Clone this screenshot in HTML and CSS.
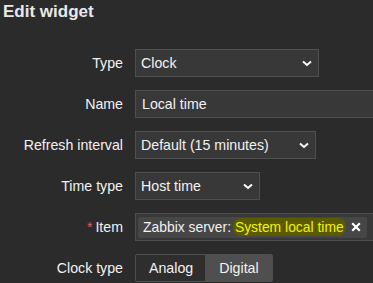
FILE: index.html
```html
<!DOCTYPE html>
<html lang="en">
<head>
    <meta charset="UTF-8">
    <meta name="viewport" content="width=device-width, initial-scale=1.0">
    <title>Edit widget</title>
    <link rel="stylesheet" href="styles.css">
</head>
<body>
    <div class="dialog">
        <h1 class="title">Edit widget</h1>
        <div class="form">
            <label class="label">Type</label>
            <div class="field">
                <div class="select select-type">
                    <span>Clock</span>
                    <svg class="chevron" width="10" height="7" viewBox="0 0 10 7"><polyline points="1,1.5 5,5 9,1.5" fill="none" stroke="#fff" stroke-width="2"/></svg>
                </div>
            </div>

            <label class="label">Name</label>
            <div class="field">
                <div class="input input-name">Local time</div>
            </div>

            <label class="label">Refresh interval</label>
            <div class="field">
                <div class="select select-refresh">
                    <span>Default (15 minutes)</span>
                    <svg class="chevron" width="10" height="7" viewBox="0 0 10 7"><polyline points="1,1.5 5,5 9,1.5" fill="none" stroke="#fff" stroke-width="2"/></svg>
                </div>
            </div>

            <label class="label">Time type</label>
            <div class="field">
                <div class="select select-time">
                    <span>Host time</span>
                    <svg class="chevron" width="10" height="7" viewBox="0 0 10 7"><polyline points="1,1.5 5,5 9,1.5" fill="none" stroke="#fff" stroke-width="2"/></svg>
                </div>
            </div>

            <label class="label"><span class="required">*</span> Item</label>
            <div class="field">
                <div class="multiselect">
                    <div class="chip">
                        <span class="chip-text">Zabbix server: <span class="marked">System local time</span></span>
                        <svg class="remove" width="10" height="10" viewBox="0 0 10 10"><path d="M1.2 1.2 L8.8 8.8 M8.8 1.2 L1.2 8.8" stroke="#fff" stroke-width="2.2"/></svg>
                    </div>
                </div>
            </div>

            <label class="label">Clock type</label>
            <div class="field">
                <div class="segmented">
                    <span class="segment">Analog</span>
                    <span class="segment active">Digital</span>
                </div>
            </div>
        </div>
    </div>
</body>
</html>
```

FILE: styles.css
```css
body {
    margin: 0;
    background-color: #2b2b2b;
    color: #f2f2f2;
    font-family: "Liberation Sans", Arial, sans-serif;
    font-size: 14.2px;
    overflow: hidden;
}
.dialog {
    width: 373px;
    height: 283px;
    overflow: hidden;
}
.title {
    margin: 2px 0 27px 3px;
    font-size: 17px;
    line-height: 20px;
    font-weight: bold;
    color: #e8e8e8;
}
.form {
    display: grid;
    grid-template-columns: 123px 238px;
    column-gap: 12px;
    row-gap: 13px;
}
.label {
    display: flex;
    align-items: center;
    justify-content: flex-end;
    height: 28px;
    white-space: nowrap;
}
.required {
    color: #e45959;
    margin-right: 3px;
}
.field {
    display: flex;
    height: 28px;
    min-width: 0;
}
.select, .input, .multiselect {
    box-sizing: border-box;
    height: 28px;
    background-color: #383838;
    border: 1px solid #4f4f4f;
    display: flex;
    align-items: center;
    white-space: nowrap;
}
.select {
    justify-content: space-between;
    padding: 0 6px 0 5px;
}
.select-type { width: 184px; }
.select-refresh { width: 181px; }
.select-time { width: 125px; }
.input {
    padding: 0 6px;
    width: 238px;
    border-right: none;
}
.chevron, .remove {
    flex: none;
}
.multiselect {
    width: 238px;
    border-right: none;
    padding: 3px 2px;
}
.chip {
    display: flex;
    align-items: center;
    height: 21px;
    width: 229px;
    box-sizing: border-box;
    padding: 0 6px 0 5px;
    background-color: #464646;
    border-radius: 2px;
    justify-content: space-between;
}
.chip-text {
    white-space: nowrap;
    font-size: 13.9px;
}
.marked {
    color: #f5f500;
    background-color: #5a5a00;
    border-radius: 8px;
    padding: 1px 2px;
    margin-left: -2px;
}
.segmented {
    display: flex;
    height: 28px;
    box-sizing: border-box;
    border: 1px solid #4f4f4f;
    border-radius: 2px;
    overflow: hidden;
}
.segment {
    display: flex;
    align-items: center;
    padding: 0 12px 0 13px;
    background-color: #2e2e2e;
}
.segment.active {
    background-color: #4f4f4f;
    padding: 0 13px 0 14px;
}
```
